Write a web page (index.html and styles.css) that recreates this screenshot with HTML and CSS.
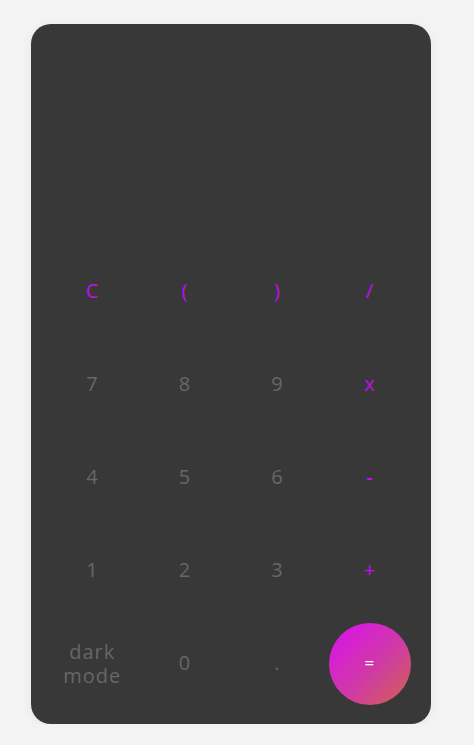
FILE: index.html
```html
<!DOCTYPE html>
<html lang="en">
<head>
<meta charset="utf-8">
<title>Calculator</title>
<link rel="stylesheet" href="styles.css">
</head>
<body>
<main class="calc">
  <div class="display"></div>
  <div class="keys">
    <button class="key op">C</button>
    <button class="key op">(</button>
    <button class="key op">)</button>
    <button class="key op">/</button>
    <button class="key">7</button>
    <button class="key">8</button>
    <button class="key">9</button>
    <button class="key op">x</button>
    <button class="key">4</button>
    <button class="key">5</button>
    <button class="key">6</button>
    <button class="key op minus">-</button>
    <button class="key">1</button>
    <button class="key">2</button>
    <button class="key">3</button>
    <button class="key op">+</button>
    <button class="key mode"><span>dark</span><span>mode</span></button>
    <button class="key">0</button>
    <button class="key">.</button>
    <button class="key equals">=</button>
  </div>
</main>
</body>
</html>
```
FILE: styles.css
```css
html, body {
  margin: 0;
  padding: 0;
}
body {
  background: #f3f3f3;
  font-family: "Open Sans", "Noto Sans", sans-serif;
}
.calc {
  box-sizing: border-box;
  width: 400px;
  height: 700px;
  margin: 24px 0 0 31px;
  background: #383838;
  border-radius: 20px;
  box-shadow: 0 2px 10px rgba(0, 0, 0, 0.06);
  padding: 0 20px 19px;
  display: flex;
  flex-direction: column;
}
.display {
  flex: 1;
}
.keys {
  display: grid;
  grid-template-columns: repeat(4, 1fr);
  grid-auto-rows: 82.5px;
  column-gap: 10px;
  row-gap: 10.5px;
}
.key {
  border: none;
  background: transparent;
  font-family: inherit;
  font-size: 20px;
  font-weight: 400;
  letter-spacing: 0.6px;
  color: #676767;
  padding: 0 0 2px;
  display: flex;
  align-items: center;
  justify-content: center;
  line-height: 24px;
}
.op {
  color: #c30cf2;
}
.minus {
  font-weight: 600;
}
.mode {
  flex-direction: column;
  font-size: 20px;
  line-height: 24px;
  letter-spacing: 1px;
  padding: 0;
}
.mode span {
  display: block;
}
.equals {
  border-radius: 50%;
  background: linear-gradient(135deg, #da0ef0 0%, #cf3aa6 55%, #d2634e 100%);
  color: #ffffff;
  font-size: 17px;
}
```
